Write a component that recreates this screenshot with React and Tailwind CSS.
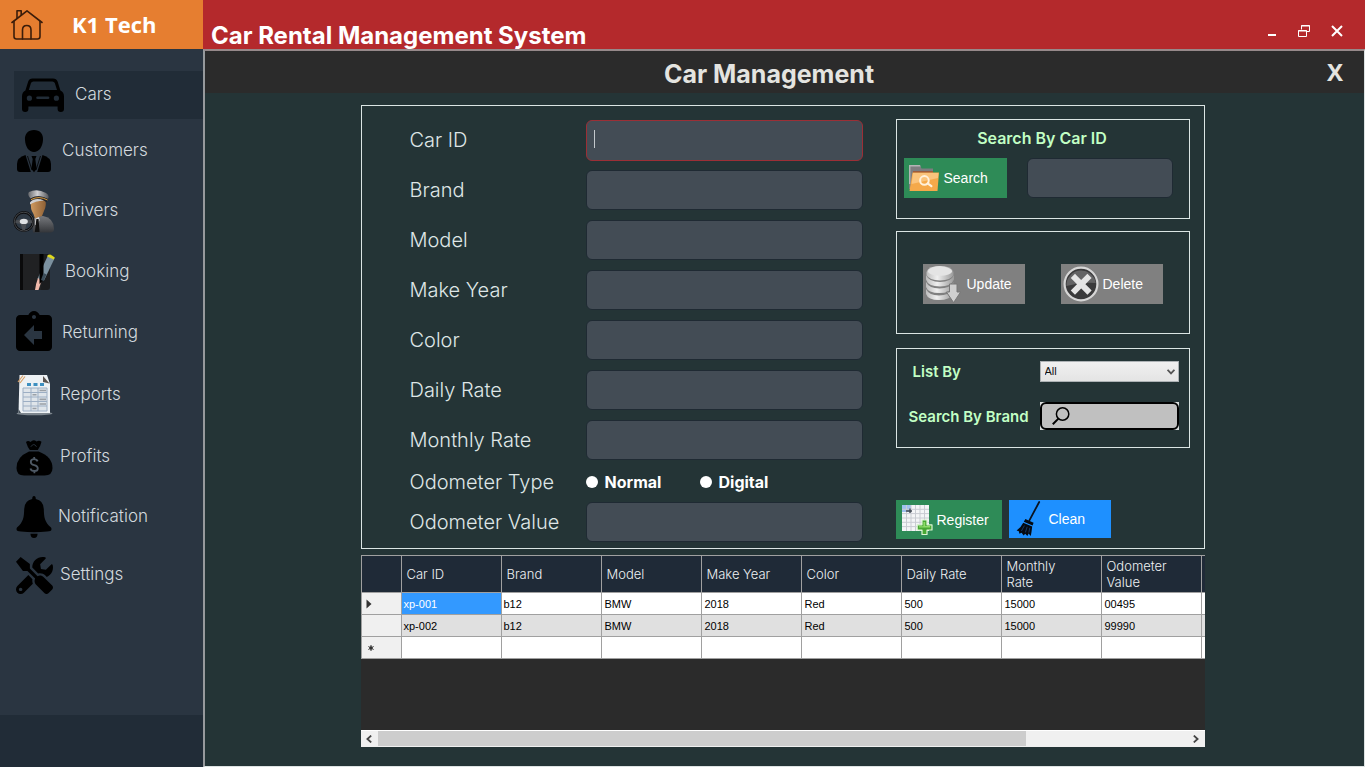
import React from "react";
import { FaTools } from "react-icons/fa";
import { MdAssignmentReturn } from "react-icons/md";

/* ---------- sidebar icons ---------- */

const HomeIcon = () => (
  <svg viewBox="0 0 32 32" className="h-8 w-8" fill="none" stroke="#3b1d0a" strokeWidth="1.6" strokeLinecap="round" strokeLinejoin="round">
    <path d="M1 13.5 L16 1.8 L31 13.5" />
    <path d="M3 12.5 V27.5 Q3 30 5.5 30 H26.5 Q29 30 29 27.5 V12.5" />
    <path d="M11.5 30 V21 Q11.5 16.5 15.8 16.5 Q20 16.5 20 21 V30" />
    <path d="M6 9 V1.8 H10.2 V5.8" />
  </svg>
);

const CarIcon = () => (
  <svg viewBox="0 0 42 34" className="h-[34px] w-[42px]">
    <path
      fillRule="evenodd"
      fill="#000"
      d="M10.5 0.5 H31 Q34.5 0.5 35.6 3.6 L38.4 12.4 Q42 14 42 18.5 V31 Q42 34 38.8 34 Q35.6 34 35.6 31 V28.5 H6.4 V31 Q6.4 34 3.2 34 Q0 34 0 31 V18.5 Q0 14 3.4 12.4 L6.2 3.6 Q7.2 0.5 10.5 0.5 Z M11.4 3.4 Q9.6 3.4 9 5 L6.8 12 H35 L32.8 5 Q32.2 3.4 30.4 3.4 Z M7.4 17.6 A2.6 2.6 0 1 0 7.4 22.8 A2.6 2.6 0 1 0 7.4 17.6 Z M34.4 17.6 A2.6 2.6 0 1 0 34.4 22.8 A2.6 2.6 0 1 0 34.4 17.6 Z M15.6 18.4 Q14.2 18.4 14.2 19.7 Q14.2 21 15.6 21 H26 Q27.4 21 27.4 19.7 Q27.4 18.4 26 18.4 Z"
    />
  </svg>
);

const CustomerIcon = () => (
  <svg viewBox="0 0 36 44" className="h-11 w-9">
    <path d="M18 1 C24 1 27.5 5 27 11 C26.6 18 23 23 18 23 C13 23 9.4 18 9 11 C8.5 5 12 1 18 1 Z" />
    <path d="M9.5 26 L14.8 43 H4 Q1 43 1 40 V35 Q1 28.5 9.5 26 Z" />
    <path d="M26.5 26 L21.2 43 H32 Q35 43 35 40 V35 Q35 28.5 26.5 26 Z" />
    <path d="M15.5 27 H20.5 L19.3 30 L20.6 40 L18 43.2 L15.4 40 L16.7 30 Z" />
    <path d="M11.5 27 L16 41 M24.5 27 L20 41" stroke="#000" strokeWidth="0.8" />
  </svg>
);

const DriverIcon = () => (
  <svg viewBox="0 0 42 44" className="h-11 w-[42px] shrink-0">
    <defs>
      <linearGradient id="jacket" x1="0" y1="0" x2="0" y2="1">
        <stop offset="0" stopColor="#77797d" />
        <stop offset="1" stopColor="#34363a" />
      </linearGradient>
      <linearGradient id="face" x1="0" y1="0" x2="1" y2="0">
        <stop offset="0" stopColor="#cf9a60" />
        <stop offset="1" stopColor="#8f6136" />
      </linearGradient>
      <linearGradient id="cap" x1="0" y1="0" x2="1" y2="0">
        <stop offset="0" stopColor="#67696d" />
        <stop offset="0.45" stopColor="#d0d0d2" />
        <stop offset="1" stopColor="#55575b" />
      </linearGradient>
    </defs>
    <path d="M19 31 Q23 27 30 27 Q41 29 41 40 Q41 43 38 43.5 H20 Z" fill="url(#jacket)" />
    <path d="M18 13 Q17 20 20.5 25 L22 29.5 L29 27 L31 22 Q34 16 32 11 Z" fill="url(#face)" />
    <path d="M22.4 29.5 L26 28 L26.6 31 L24.5 36 L22 36 Z" fill="#dcdcdc" />
    <path d="M23.4 30 L25.6 30 L26.5 43 H21.8 Z" fill="#111" />
    <path d="M16 3 Q24 -1 33 4 Q37 6.5 35 10 Q26 5 17.5 9.5 Q14 6 16 3 Z" fill="url(#cap)" />
    <path d="M17.5 9.5 Q26 5 35 10 L33.5 13 Q26 8 18 12.5 Z" fill="#25262a" />
    <path d="M18 10.6 Q26 6.4 34.5 11" stroke="#e0a040" strokeWidth="1" fill="none" />
    <path d="M17 13.4 Q22 8 31 11.5 Q22 12 17 15.4 Z" fill="#cfd0d2" />
    <circle cx="10.8" cy="32.6" r="9.2" fill="#2f3944" stroke="#0c0c0e" strokeWidth="2.6" />
    <circle cx="10.8" cy="32.6" r="9.4" fill="none" stroke="#6b6e72" strokeWidth="0.6" />
    <path d="M2.4 31.6 L8 30.2 H13.5 L19.2 31.6 V34 L13.5 35 L12 41 H9.4 L7.8 35 L2.4 34 Z" fill="#4a4d52" />
    <ellipse cx="10.8" cy="32.4" rx="4" ry="2.6" fill="#dfe1e3" />
  </svg>
);

const BookingIcon = () => (
  <svg viewBox="0 0 36 38" className="h-[38px] w-9">
    <path d="M1 1 H27 V37 H1 Z" fill="#202123" />
    <path d="M1 1 H4 V37 H1 Z" fill="#0a0a0b" />
    <path d="M24 1 H31 V34 Q31 37 28 37 H22 Z" fill="#1b1c1e" />
    <path d="M29.2 2 L35.5 5.4 L25 27.5 L18.5 26 L24 13 Z" fill="#7b919f" />
    <path d="M28.8 2 Q31 0.6 35.8 4.4 L34.8 6.4 L28.2 3.4 Z" fill="#dfd81e" />
    <path d="M19 25 L22.5 28 L19.5 37 H16 Q17 30 19 25 Z" fill="#f0b9aa" />
    <path d="M20.5 1 H24.5 V27 L20.5 31 Z" fill="#000" />
    <path d="M24.5 20 L27.6 21.4 L24.6 28 L22 27 Z" fill="#3c4d59" />
  </svg>
);

const ReportIcon = () => (
  <svg viewBox="0 0 37 42" className="h-[42px] w-[37px]">
    <ellipse cx="18.5" cy="39.5" rx="18" ry="1.8" fill="#7e878f" />
    <path d="M3.5 1 H31 L34 10 V39 H2.5 Z" fill="#edf1f4" />
    <path d="M2.5 35 L5 39 H2.5 Z" fill="#45505a" />
    <path d="M27 2 L33.5 9.5 L27 8 Z" fill="#5b5450" />
    <path d="M2 8 L7 1.5 M4 9 L9 2.5" stroke="#d9a066" strokeWidth="1.2" />
    <path d="M11 9 H15 V12 H11 Z M17.5 9 H21.5 V12 H17.5 Z M24 9 H28 V12 H24 Z" fill="#3d8fc0" />
    <path d="M7 14 H31 V37 H7 Z" fill="#dfe5ea" />
    <path d="M7 14 H31 V37 H7 Z M7 18.5 H31 M7 23 H31 M7 27.5 H31 M7 32 H31 M15 14 V37 M22 14 V37" fill="none" stroke="#9dafc4" strokeWidth="1" />
    <path d="M23.5 16.5 H30 M23.5 25.4 H30 M23.5 30 H30 M16.5 20.8 H20.5 M16.5 34.5 H20.5" stroke="#9aa0a6" strokeWidth="1.6" />
  </svg>
);

const ProfitIcon = () => (
  <svg viewBox="0 0 37 37" className="h-[37px] w-[37px]">
    <path d="M10 3 Q12 1.2 14.5 3 Q17.5 -0.5 20.5 2.6 Q23 0.6 25.5 2.8 Q24.5 7.5 21.8 11 H13.8 Q11.5 8 10 3 Z" />
    <path d="M13 12.6 H22.6 Q36.5 18 36.5 29 Q36.5 36.5 28.5 36.5 H8 Q0.5 36.5 0.5 29 Q0.5 18 13 12.6 Z" />
    <path d="M14.8 7.8 Q17.8 3.2 20.5 7.8" fill="none" stroke="#2a3541" strokeWidth="0.9" />
    <path d="M21.6 22.4 Q20.8 20.2 18 20.2 Q14.8 20.2 14.8 23 Q14.8 25.4 18.2 26.1 Q21.8 26.9 21.8 29.4 Q21.8 32 18.4 32 Q15.2 32 14.4 29.4 M18.2 18 V20.4 M18.4 32 V34.2" fill="none" stroke="#4d5864" strokeWidth="1.8" />
  </svg>
);

const BellIcon = () => (
  <svg viewBox="0 0 36 42" className="h-[42px] w-9">
    <path d="M18 0 Q19.8 0 19.8 3 Q27.5 4.5 27.8 13 C28 21 28.5 26 35 31.5 Q37 35.2 31 35.4 Q18 37 5 35.4 Q-1 35.2 1 31.5 C7.5 26 8 21 8.2 13 Q8.5 4.5 16.2 3 Q16.2 0 18 0 Z" />
    <path d="M14.4 37.8 H21.6 Q21.4 42 18 42 Q14.6 42 14.4 37.8 Z" />
  </svg>
);

/* ---------- button icons ---------- */

const FolderSearchIcon = () => (
  <svg viewBox="0 0 32 28" className="h-7 w-8">
    <path d="M1 1 H12 L13.5 4.5 H25 V12 L3 25 H1 Z" fill="#7d7d80" />
    <path d="M1 1 H12 L12.6 2.4 H2.4 V20 H1 Z" fill="#b4b4b6" />
    <path d="M5 7 H25 V10 H5 Z" fill="#9c5c3e" />
    <path d="M4.5 8.5 H31 L29.5 27 H1.5 Z" fill="#f5a94a" />
    <path d="M5 9 H30.4 L30 14 L3.6 20 Z" fill="#fbc47c" />
    <circle cx="16.4" cy="16.4" r="4.3" fill="none" stroke="#fff1dc" strokeWidth="2" />
    <path d="M19.6 19.4 L23.4 22.2" stroke="#fff1dc" strokeWidth="2.2" strokeLinecap="round" />
  </svg>
);

const DatabaseIcon = () => (
  <svg viewBox="0 0 36 38" className="h-[38px] w-9">
    <defs>
      <linearGradient id="disc" x1="0" y1="0" x2="1" y2="0">
        <stop offset="0" stopColor="#bdbdbd" />
        <stop offset="0.4" stopColor="#efefef" />
        <stop offset="1" stopColor="#9a9a9a" />
      </linearGradient>
    </defs>
    <path d="M1 24 Q4 30.5 14 30.5 Q24 30.5 28 24 V29 Q25 35 14 35 Q3 35 1 29 Z" fill="url(#disc)" />
    <path d="M1 17 Q4 23.5 14.5 23.5 Q25 23.5 28.5 17 V22 Q25 28 14.5 28 Q3 28 1 22 Z" fill="url(#disc)" />
    <path d="M1 10 Q4 17 15 17 Q26 17 29 10 V14.5 Q26 21.5 15 21.5 Q3 21.5 1 14.5 Z" fill="url(#disc)" />
    <path d="M1.5 7 Q3 1 15 1 Q27 1 28.5 7 V10 Q26 15.4 15 15.4 Q4 15.4 1.5 10 Z" fill="url(#disc)" />
    <ellipse cx="15" cy="6.2" rx="12" ry="4.6" fill="#e4e4e4" />
    <path d="M24.5 19 H32 V27 H35.6 L28.6 37.6 L21.4 27 H24.5 Z" fill="#cfcfcf" stroke="#777" strokeWidth="1" />
  </svg>
);

const DeleteIcon = () => (
  <svg viewBox="0 0 36 36" className="h-9 w-9">
    <circle cx="18" cy="18" r="16.4" fill="#3a3a3b" stroke="#d6d6d6" strokeWidth="2.2" />
    <path d="M3.4 20 A14.8 14.8 0 0 1 32.8 17 Q18 16 3.4 20 Z" fill="#636364" />
    <path d="M12 12 L24.4 24.4 M24.4 12 L12 24.4" stroke="#e4e4e4" strokeWidth="6" strokeLinecap="square" />
  </svg>
);

const RegisterIcon = () => (
  <svg viewBox="0 0 32 31" className="h-[31px] w-8">
    <path d="M1 1 H28 V27 H1 Z" fill="#f4f5f7" />
    <path d="M1 1 H10 V8 H1 Z" fill="#9fc0ee" />
    <path d="M1 5.3 H28 M1 9.6 H28 M1 14 H28 M1 18.3 H28 M1 22.6 H28 M5.5 1 V27 M10 1 V27 M14.5 1 V27 M19 1 V27 M23.5 1 V27" stroke="#c9ccd2" strokeWidth="1" />
    <path d="M5 7 H11 M9 4.5 V9" stroke="#444b55" strokeWidth="1.4" />
    <path d="M21 16 H26 V20.8 H31 V26 H26 V30.6 H21 V26 H16.2 V20.8 H21 Z" fill="#49a834" stroke="#dcf5d2" strokeWidth="1.2" strokeLinejoin="round" />
    <path d="M22.4 18 H24.2 V22 H29 V23.4 H18 V22.2 H22.4 Z" fill="#8fdc6a" />
  </svg>
);

const BroomIcon = () => (
  <svg viewBox="0 0 25 36" className="h-9 w-[25px]">
    <path d="M23.2 1 L13.4 19.4" stroke="#0a1422" strokeWidth="1.8" strokeLinecap="round" />
    <path d="M9.4 18 L17.6 21.8 L16.6 24.6 L7.8 20.8 Z" fill="#050a12" />
    <path d="M7.2 21.8 L16.2 25.6 Q15.6 31 14.8 35 L12.6 32.6 L11.4 35 L9.2 32.8 L7.6 34.6 L5.6 31.8 L3.4 32.8 L2.8 30.2 L0.6 29.6 Q5 26.6 7.2 21.8 Z" fill="#050a12" />
    <path d="M8.4 24.6 L5.4 30 M11.2 25.8 L9.4 31.4 M13.8 26.8 L12.8 31.6" stroke="#1b4a86" strokeWidth="0.7" />
  </svg>
);

/* ---------- data ---------- */

const NAV = [
  { label: "Customers", icon: <CustomerIcon />, row: "h-[60px]", gap: "ml-2" },
  { label: "Drivers", icon: <DriverIcon />, row: "h-[60px]", gap: "ml-2" },
  { label: "Booking", icon: <BookingIcon />, row: "h-[62px] pl-[3px]", gap: "ml-2" },
  { label: "Returning", icon: <MdAssignmentReturn className="h-12 w-12 shrink-0" color="#000" />, row: "h-[60px]", gap: "ml-2" },
  { label: "Reports", icon: <ReportIcon />, row: "h-16", gap: "ml-1.5" },
  { label: "Profits", icon: <ProfitIcon />, row: "h-[60px]", gap: "ml-1.5" },
  { label: "Notification", icon: <BellIcon />, row: "h-[60px]", gap: "ml-1" },
  { label: "Settings", icon: <FaTools className="h-[37px] w-[37px]" color="#000" />, row: "h-14", gap: "ml-1.5" },
];

const FIELDS = [
  { id: "car-id", label: "Car ID", active: true },
  { id: "brand", label: "Brand" },
  { id: "model", label: "Model" },
  { id: "make-year", label: "Make Year" },
  { id: "color", label: "Color" },
  { id: "daily-rate", label: "Daily Rate" },
  { id: "monthly-rate", label: "Monthly Rate" },
];

const COLUMNS = ["Car ID", "Brand", "Model", "Make Year", "Color", "Daily Rate", "Monthly Rate", "Odometer Value"];

const ROWS = [
  ["xp-001", "b12", "BMW", "2018", "Red", "500", "15000", "00495"],
  ["xp-002", "b12", "BMW", "2018", "Red", "500", "15000", "99990"],
];

/* ---------- pieces ---------- */

function TextField({ id, label, active }) {
  return (
    <div className="flex h-[50px] items-center">
      <label htmlFor={id} className="w-44 shrink-0 text-xl font-light text-[#dfe6e6]">
        {label}
      </label>
      <div className="relative flex-1">
        <input
          id={id}
          type="text"
          className={
            active
              ? "peer block h-[41px] w-full rounded-md border border-[#9b2f36] bg-[#434c55] px-2 text-white outline-none"
              : "block h-10 w-full rounded-md border border-[#1f2a33] bg-[#434c55] px-2 text-white outline-none"
          }
        />
        {active && <span className="absolute left-2 top-2.5 h-[18px] w-px bg-[#c3c8cc] peer-focus:hidden" />}
      </div>
    </div>
  );
}

function ActionButton({ className, children }) {
  return (
    <button
      type="button"
      className={"flex items-center whitespace-nowrap font-['Liberation_Sans',Arial,sans-serif] text-sm text-white " + className}
    >
      {children}
    </button>
  );
}

function Sidebar() {
  return (
    <aside className="flex w-[203px] shrink-0 flex-col bg-[#2a3541]">
      <div className="flex h-[49px] items-center bg-[#e67e30] pl-[11px]">
        <a href="#home" aria-label="Home">
          <HomeIcon />
        </a>
        <span className="ml-[29px] font-['Open_Sans',sans-serif] text-[22px] font-bold text-white">K1 Tech</span>
      </div>
      <nav className="flex flex-col pl-3.5 pt-[22px] text-[17px] font-light text-[#d3d9de]">
        <a href="#cars" className="mb-0.5 flex h-12 items-center bg-[#212c37] pl-2">
          <CarIcon />
          <span className="ml-[11px]">Cars</span>
        </a>
        {NAV.map((item) => (
          <a key={item.label} href={"#" + item.label.toLowerCase()} className={"flex items-center " + item.row}>
            <span className="flex w-10 shrink-0 justify-center">{item.icon}</span>
            <span className={item.gap}>{item.label}</span>
          </a>
        ))}
      </nav>
      <div className="mt-auto h-[52px] bg-[#212c37]" />
    </aside>
  );
}

function TitleBar() {
  return (
    <header className="flex h-[49px] items-end overflow-hidden bg-[#b4292c] pl-2 pr-[22px]">
      <h1 className="flex-1 whitespace-nowrap text-2xl font-bold leading-[26px] text-white">Car Rental Management System</h1>
      <div className="flex items-center gap-[21px] pb-3">
        <button type="button" aria-label="Minimize">
          <svg viewBox="0 0 12 12" className="h-3 w-3">
            <path d="M3 9 H11 V11 H3 Z" fill="#fff" />
          </svg>
        </button>
        <button type="button" aria-label="Restore">
          <svg viewBox="0 0 12 12" className="h-3 w-3" fill="none" stroke="#fff" strokeWidth="1">
            <path d="M3.5 4.5 V0.5 H11.5 V6.5 H9" />
            <path d="M3 1 H12" />
            <path d="M0.5 5.5 H8.5 V11.5 H0.5 Z M0 6 H9" />
          </svg>
        </button>
        <button type="button" aria-label="Close">
          <svg viewBox="0 0 12 12" className="h-3 w-3">
            <path d="M1 1 L11 11 M11 1 L1 11" stroke="#fff" strokeWidth="2" />
          </svg>
        </button>
      </div>
    </header>
  );
}

function CarForm() {
  return (
    <form className="flex justify-between border border-[#dbe5e4] pb-px pl-12 pr-3.5">
      <div className="w-[453px] pt-[9px]">
        {FIELDS.map((f) => (
          <TextField key={f.id} {...f} />
        ))}
        <fieldset className="flex h-[34px] items-center">
          <legend className="contents">
            <span className="w-44 shrink-0 text-xl font-light text-[#dfe6e6]">Odometer Type</span>
          </legend>
          <label className="flex w-[114px] items-center gap-[7px] text-base font-bold text-white">
            <input type="radio" name="odometer" className="h-3 w-3 appearance-none rounded-full bg-white checked:border-4 checked:border-white checked:bg-black" />
            Normal
          </label>
          <label className="flex items-center gap-[7px] text-base font-bold text-white">
            <input type="radio" name="odometer" className="h-3 w-3 appearance-none rounded-full bg-white checked:border-4 checked:border-white checked:bg-black" />
            Digital
          </label>
        </fieldset>
        <div className="-mt-0.5">
          <TextField id="odometer-value" label="Odometer Value" />
        </div>
      </div>

      <div className="w-[294px] pt-[13px]">
        <section className="h-[100px] border border-[#dbe5e4] pl-[7px] pt-1.5">
          <label htmlFor="search-id" className="block pr-2 text-center text-base font-semibold leading-6 text-[#c2ffc4]">
            Search By Car ID
          </label>
          <div className="mt-2 flex gap-5">
            <ActionButton className="h-10 w-[103px] gap-1 bg-[#2e8b57] pl-1">
              <FolderSearchIcon />
              Search
            </ActionButton>
            <input id="search-id" type="text" className="h-10 w-[146px] rounded-md border border-[#1f2a33] bg-[#434c55] px-2 text-white outline-none" />
          </div>
        </section>

        <section className="mt-3 flex h-[103px] items-center justify-center gap-9 border border-[#dbe5e4] pt-0.5">
          <ActionButton className="h-10 w-[102px] gap-1.5 bg-[#808080] pl-0.5">
            <DatabaseIcon />
            Update
          </ActionButton>
          <ActionButton className="h-10 w-[102px] gap-1 bg-[#808080] pl-0.5">
            <DeleteIcon />
            Delete
          </ActionButton>
        </section>

        <section className="mt-3.5 flex h-[100px] flex-col gap-5 border border-[#dbe5e4] pl-3 pr-2.5 pt-3">
          <div className="flex items-center justify-between">
            <label htmlFor="list-by" className="pl-1 text-[15px] font-semibold leading-5 text-[#c2ffc4]">
              List By
            </label>
            <div className="relative">
              <select
                id="list-by"
                className="block h-[21px] w-[139px] appearance-none border border-[#adb2b5] bg-gradient-to-b from-[#f0f0f0] to-[#e4e4e4] pl-1 font-['Liberation_Sans',Arial,sans-serif] text-[11px] text-[#111] outline-none"
              >
                <option>All</option>
              </select>
              <svg viewBox="0 0 8 6" className="pointer-events-none absolute right-1 top-2 h-1.5 w-2" fill="none" stroke="#555" strokeWidth="1.8">
                <path d="M0.6 0.8 L4 4.4 L7.4 0.8" />
              </svg>
            </div>
          </div>
          <div className="flex items-center justify-between">
            <label htmlFor="search-brand" className="whitespace-nowrap pt-0.5 text-[15px] font-semibold leading-5 text-[#c2ffc4]">
              Search By Brand
            </label>
            <div className="relative bg-[#d8dcdc]">
              <input id="search-brand" type="text" className="block h-7 w-[139px] rounded-md border-2 border-black bg-[#c0c0c0] pl-9 pr-2 text-sm text-black outline-none" />
              <svg viewBox="0 0 18 18" className="pointer-events-none absolute left-3 top-[5px] h-[18px] w-[18px]" fill="none" stroke="#000" strokeWidth="1.5">
                <circle cx="10.6" cy="7" r="6.2" />
                <path d="M6.4 11.6 L0.8 17.2" strokeWidth="2" />
              </svg>
            </div>
          </div>
        </section>

        <div className="mt-[52px] flex gap-[7px]">
          <ActionButton className="h-[39px] w-[106px] gap-1 bg-[#2e8b57] pl-[5px]">
            <RegisterIcon />
            Register
          </ActionButton>
          <ActionButton className="h-[38px] w-[102px] gap-2 bg-[#1e90ff] pl-[7px]">
            <BroomIcon />
            Clean
          </ActionButton>
        </div>
      </div>
    </form>
  );
}

function CarGrid() {
  const line = "border-b border-r border-[#a0a0a0] ";
  return (
    <div className="mt-1.5 flex h-48 flex-col bg-[#2b2b2b]">
      <div className="flex-1 overflow-hidden">
        <table className="w-[941px] table-fixed border-separate border-spacing-0 border-l border-t border-[#a0a0a0]">
          <colgroup>
            <col className="w-10" />
            {COLUMNS.map((c) => (
              <col key={c} className="w-[100px]" />
            ))}
            <col className="w-[100px]" />
          </colgroup>
          <thead>
            <tr className="h-[37px] bg-[#1f2a37] text-left text-[13px] leading-4 text-[#eef1f3]">
              <th className={line} />
              {COLUMNS.map((c) => (
                <th key={c} className={line + "whitespace-normal pl-[5px] pr-6 align-middle font-light"}>
                  {c}
                </th>
              ))}
              <th className={line} />
            </tr>
          </thead>
          <tbody className="font-['Liberation_Sans',Arial,sans-serif] text-[11px] leading-4 text-black">
            {ROWS.map((r, i) => (
              <tr key={r[0]} className={i === 0 ? "h-[22px] bg-white" : "h-[22px] bg-[#e0e0e0]"}>
                <td className={line + "bg-[#f0f0f0] pl-1"}>
                  {i === 0 && (
                    <svg viewBox="0 0 6 10" className="block h-2.5 w-1.5">
                      <path d="M0.5 0.5 L5.5 5 L0.5 9.5 Z" fill="#333" />
                    </svg>
                  )}
                </td>
                {r.map((v, j) => (
                  <td key={j} className={line + (i === 0 && j === 0 ? "bg-[#3399ff] pl-0.5 text-white" : j < 2 ? "pl-0.5" : "pl-[3px]")}>
                    {v}
                  </td>
                ))}
                <td className={line} />
              </tr>
            ))}
            <tr className="h-[22px] bg-white">
              <td className={line + "bg-[#f0f0f0] pl-1.5"}>
                <svg viewBox="0 0 6 6" className="block h-1.5 w-1.5" stroke="#333" strokeWidth="1">
                  <path d="M3 0 V6 M0.4 1.5 L5.6 4.5 M5.6 1.5 L0.4 4.5" />
                  <circle cx="3" cy="3" r="1.2" fill="#333" />
                </svg>
              </td>
              {COLUMNS.map((c) => (
                <td key={c} className={line} />
              ))}
              <td className={line} />
            </tr>
          </tbody>
        </table>
      </div>
      <div className="flex h-[17px] items-stretch border-t border-white bg-[#f0f0f0]">
        <button type="button" aria-label="Scroll left" className="flex w-[17px] items-center justify-center">
          <svg viewBox="0 0 6 8" className="h-2 w-1.5" fill="none" stroke="#444" strokeWidth="1.8">
            <path d="M5.2 0.6 L1.4 4 L5.2 7.4" />
          </svg>
        </button>
        <div className="flex-1">
          <div className="h-[15px] w-4/5 bg-[#cdcdcd]" />
        </div>
        <button type="button" aria-label="Scroll right" className="flex w-[17px] items-center justify-center">
          <svg viewBox="0 0 6 8" className="h-2 w-1.5" fill="none" stroke="#444" strokeWidth="1.8">
            <path d="M0.8 0.6 L4.6 4 L0.8 7.4" />
          </svg>
        </button>
      </div>
    </div>
  );
}

export default function App() {
  return (
    <div className="flex min-h-screen bg-[#2a3541] font-['Inter',sans-serif]">
      <Sidebar />
      <div className="flex min-w-0 flex-1 flex-col">
        <TitleBar />
        <main className="flex-1 border-b border-l-2 border-r border-t-2 border-b-[#dde3e3] border-l-[#96999c] border-r-[#dde3e3] border-t-[#96898a] bg-[#243436]">
          <div className="flex h-[42px] items-center bg-[#2b2b2b] pr-[21px] text-[#e4e4e0]">
            <h2 className="flex-1 pl-1.5 pt-1.5 text-center text-[25px] font-bold">Car Management</h2>
            <button type="button" className="font-['Open_Sans',sans-serif] text-[24px] font-bold leading-8">
              X
            </button>
          </div>
          <div className="pr-1 pt-3">
            <div className="mx-auto max-w-[844px]">
              <CarForm />
              <CarGrid />
            </div>
          </div>
        </main>
      </div>
    </div>
  );
}
